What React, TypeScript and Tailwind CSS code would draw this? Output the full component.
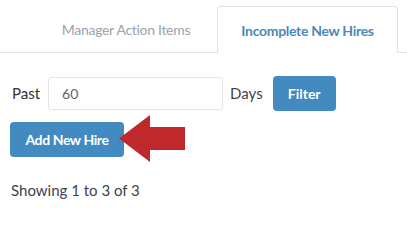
import React from "react";

export default function App() {
  return (
    <div className="w-[407px] h-[203px] bg-white overflow-hidden font-['Lato','Liberation_Sans',sans-serif]">
      {/* Tabs */}
      <div className="flex items-end pt-[7px] pl-[10px] border-b border-[#e3e3e3] h-[53px]">
        <div className="ml-[28px] mr-[3px] w-[176px] h-[46px] flex items-center justify-center text-[14px] tracking-[-0.3px] text-[#9ba3ad]">
          Manager Action Items
        </div>
        <div className="relative -mb-px w-[181px] h-[47px] flex items-center justify-center rounded-t-[4px] border border-b-0 border-[#e3e3e3] bg-white text-[14px] tracking-[-0.3px] font-bold text-[#4a89b8]">
          Incomplete New Hires
        </div>
      </div>

      {/* Filter row */}
      <div className="pl-[12px] pt-[23px] flex items-center">
        <span className="text-[15px] text-[#333]">Past</span>
        <input
          defaultValue="60"
          className="ml-[8px] w-[175px] h-[33px] border border-[#e5e5e5] rounded-[3px] pl-[13px] text-[14px] text-[#666] outline-none"
        />
        <span className="ml-[7px] text-[15px] text-[#3f4454]">Days</span>
        <button className="ml-[10px] w-[63px] h-[35px] rounded-[4px] bg-[#428ac0] text-white text-[14px] font-bold">
          Filter
        </button>
      </div>

      {/* Add new hire */}
      <div className="pl-[10px] pt-[11px]">
        <div className="relative inline-block">
          <button className="w-[114px] h-[35px] rounded-[4px] bg-[#428ac0] text-white text-[14px] tracking-[-0.4px] font-bold">
            Add New Hire
          </button>
          <svg
            className="absolute left-[109px] top-[-7px]"
            width="67"
            height="48"
            viewBox="0 0 67 48"
          >
            <polygon
              points="0,23.5 31,0 31,12 66,12 66,35 31,35 31,47"
              fill="#bf282c"
            />
          </svg>
        </div>
      </div>

      {/* Showing */}
      <div className="pl-[11px] pt-[22px] text-[15px] text-[#3d4250]">
        Showing 1 to 3 of 3
      </div>
    </div>
  );
}
